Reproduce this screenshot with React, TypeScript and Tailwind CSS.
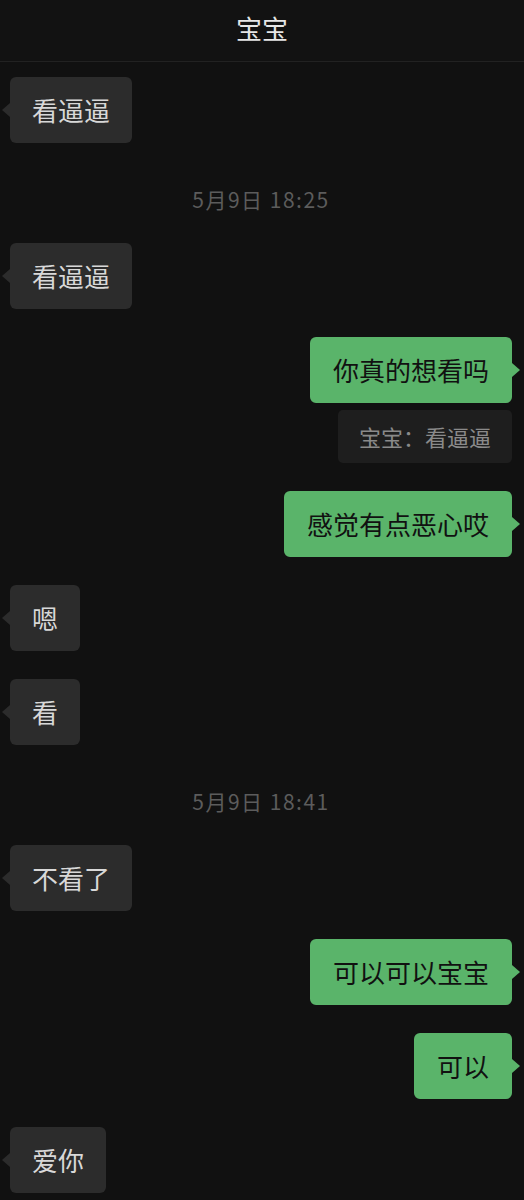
type Msg =
  | { kind: "in"; text: string }
  | { kind: "out"; text: string }
  | { kind: "quote"; text: string }
  | { kind: "time"; text: string };

const messages: Msg[] = [
  { kind: "in", text: "看逼逼" },
  { kind: "time", text: "5月9日 18:25" },
  { kind: "in", text: "看逼逼" },
  { kind: "out", text: "你真的想看吗" },
  { kind: "quote", text: "宝宝：看逼逼" },
  { kind: "out", text: "感觉有点恶心哎" },
  { kind: "in", text: "嗯" },
  { kind: "in", text: "看" },
  { kind: "time", text: "5月9日 18:41" },
  { kind: "in", text: "不看了" },
  { kind: "out", text: "可以可以宝宝" },
  { kind: "out", text: "可以" },
  { kind: "in", text: "爱你" },
];

const font = { fontFamily: '"Noto Sans CJK SC", "Noto Sans", sans-serif' };

const Incoming = ({ text }: { text: string }) => (
  <div className="flex justify-start">
    <div className="relative rounded-[6px] bg-[#2c2c2c] px-[22px] py-[15px] text-[26px] leading-[36px] text-[#d8d8d8]">
      {/* tail */}
      <span className="absolute right-full top-1/2 -translate-y-1/2 h-0 w-0 border-y-[7px] border-r-[8px] border-y-transparent border-r-[#2c2c2c]" />
      {text}
    </div>
  </div>
);

const Outgoing = ({ text }: { text: string }) => (
  <div className="flex justify-end">
    <div className="relative rounded-[6px] bg-[#5ab46a] px-[23px] py-[15px] text-[26px] leading-[36px] text-[#111111]">
      <span className="absolute left-full top-1/2 -translate-y-1/2 h-0 w-0 border-y-[7px] border-l-[8px] border-y-transparent border-l-[#5ab46a]" />
      {text}
    </div>
  </div>
);

const App = () => {
  return (
    <div className="h-[1200px] w-full overflow-hidden bg-[#111111]" style={font}>
      {/* Header */}
      <div className="flex h-[62px] items-center justify-center border-b border-[#222222] bg-[#121212] pb-[6px]">
        <span className="text-[26px] text-[#e6e6e6]">宝宝</span>
      </div>

      {/* Messages */}
      <div className="flex flex-col gap-[28px] pl-[10px] pr-[12px] pt-[15px]">
        {messages.map((m, i) => {
          if (m.kind === "time")
            return (
              <div key={i} className="flex justify-center pt-[16px] pb-[4px] text-[21px] leading-[24px] tracking-[1.5px] text-[#5c5c5c]">
                {m.text}
              </div>
            );
          if (m.kind === "quote")
            return (
              <div key={i} className="-mt-[21px] flex justify-end">
                <div className="rounded-[5px] bg-[#1e1e1e] px-[21px] py-[12px] text-[22px] leading-[29px] text-[#8a8a8a]">
                  {m.text}
                </div>
              </div>
            );
          if (m.kind === "out") return <Outgoing key={i} text={m.text} />;
          return <Incoming key={i} text={m.text} />;
        })}
      </div>
    </div>
  );
};

export default App;
